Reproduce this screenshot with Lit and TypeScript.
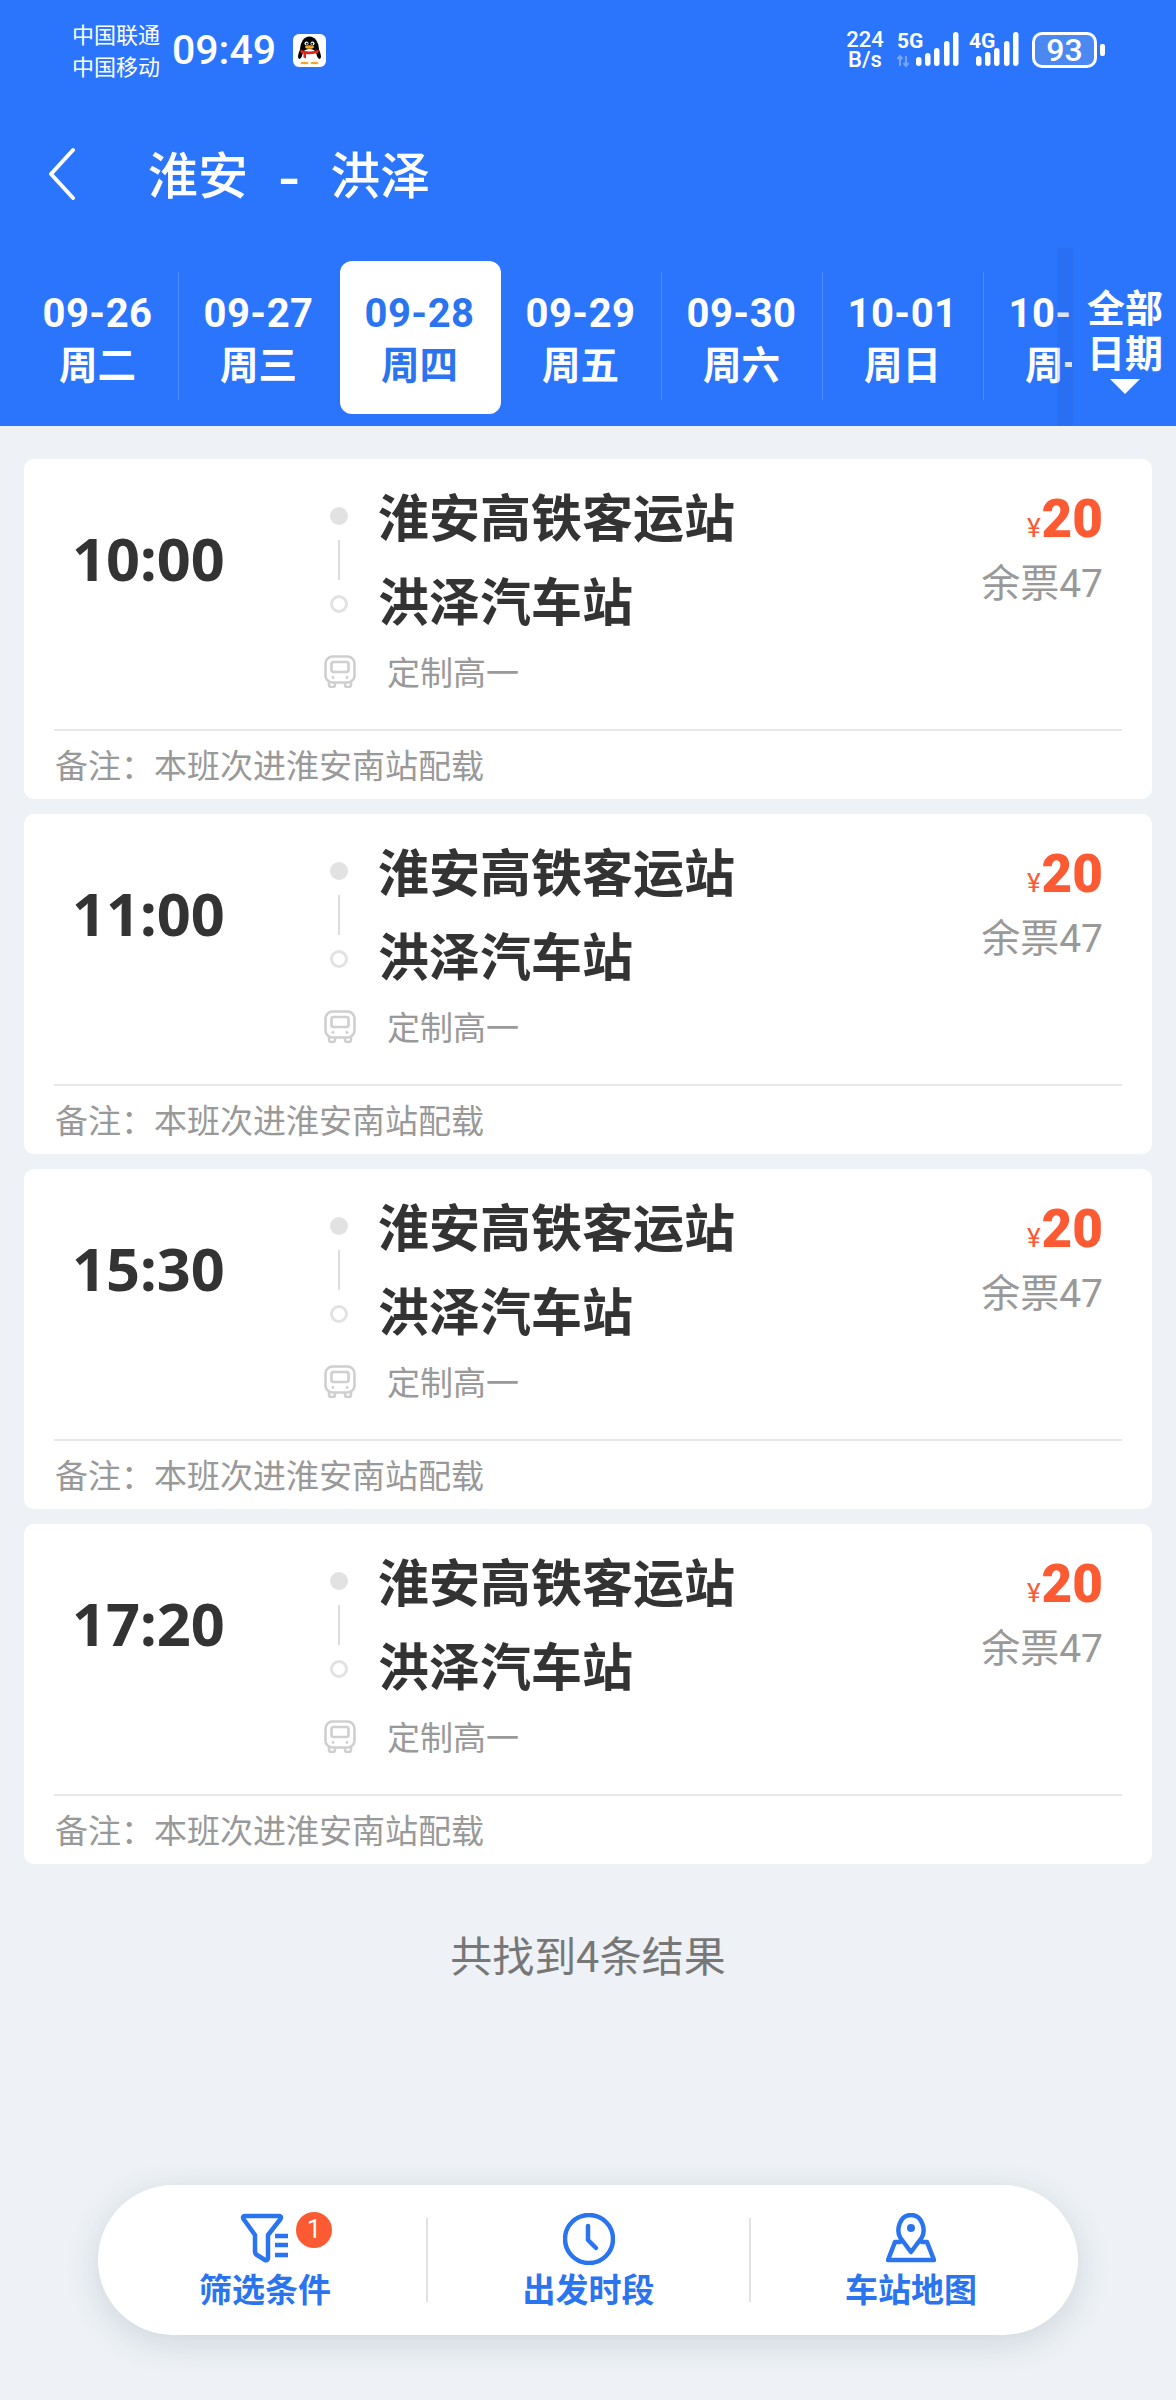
import {css, html, svg, LitElement} from "lit";
import {customElement} from "lit/decorators.js";

const TABS = [
  {date: "09-26", week: "周二"},
  {date: "09-27", week: "周三"},
  {date: "09-28", week: "周四", active: true},
  {date: "09-29", week: "周五"},
  {date: "09-30", week: "周六"},
  {date: "10-01", week: "周日"},
  {date: "10-02", week: "周一"},
];

const TIMES = ["10:00", "11:00", "15:30", "17:20"];

// x offset, top of bar (the bars all end at y=34)
const BARS_5G = [[19, 25], [28, 21], [37, 16], [47, 9], [56, 0]];
const BARS_4G = [[7, 24], [16, 20], [25, 16], [35, 9], [44, 0]];

@customElement("app-root")
export class AppRoot extends LitElement {
  static override styles = css`
    :host {
      display: block;
      width: 1176px;
      min-height: 2400px;
      background: #eef2f6;
      font-family: "Noto Sans CJK SC", "Noto Sans", sans-serif;
    }
    .header {
      background: #2b75fd;
      color: #fff;
    }
    .status {
      display: flex;
      justify-content: space-between;
      align-items: center;
      height: 100px;
      padding: 0 71px 0 72px;
    }
    .status-left,
    .status-right {
      display: flex;
      align-items: center;
    }
    .carrier {
      font-size: 22px;
      line-height: 32px;
      width: 100px;
      margin-top: -3px;
    }
    .clock {
      font-family: Roboto, sans-serif;
      font-weight: 500;
      font-size: 41px;
      line-height: 50px;
      width: 121px;
    }
    .speed {
      font-family: Roboto, sans-serif;
      font-weight: 500;
      font-size: 22px;
      line-height: 20px;
      text-align: center;
      width: 38px;
      margin-right: 13px;
    }
    .net {
      display: block;
      margin-right: 10px;
      overflow: visible;
    }
    .net text {
      font-family: Roboto, sans-serif;
      font-weight: 700;
      font-size: 21px;
      fill: #fff;
    }
    .battery {
      box-sizing: border-box;
      width: 65px;
      height: 36px;
      margin-left: 3px;
      border: 3px solid #fff;
      border-radius: 10px;
      background: #4b88f2;
      font-family: Roboto, sans-serif;
      font-weight: 500;
      font-size: 32px;
      line-height: 30px;
      text-align: center;
    }
    .nub {
      width: 5px;
      height: 12px;
      margin-left: 3px;
      border-radius: 2px;
      background: #fff;
    }
    .nav {
      display: flex;
      align-items: center;
      height: 148px;
      padding-left: 48px;
    }
    .nav svg {
      margin-right: 73px;
    }
    .title {
      font-size: 50px;
      font-weight: 500;
      display: flex;
      align-items: center;
      gap: 30px;
      padding-bottom: 5px;
    }
    .title .dash {
      font-size: 62px;
      line-height: 60px;
    }
    .tabs {
      display: flex;
      height: 178px;
    }
    .scroller {
      display: flex;
      width: 1072px;
      flex: none;
      box-sizing: border-box;
      padding: 13px 0 0 18px;
      overflow: hidden;
    }
    .tab {
      position: relative;
      flex: none;
      box-sizing: border-box;
      width: 161px;
      height: 153px;
      padding: 28px 2px 0 0;
      text-align: center;
      border-radius: 12px;
    }
    .tab:not(.active):not(.before-active):not(:last-child)::after {
      content: "";
      position: absolute;
      right: 0;
      top: 11px;
      bottom: 14px;
      width: 1px;
      background: rgba(255, 255, 255, 0.16);
    }
    .tab.active {
      background: #fff;
      color: #2b74f0;
    }
    .tab .date {
      font-family: Roboto, sans-serif;
      font-weight: 700;
      font-size: 40px;
      letter-spacing: 0.5px;
      line-height: 50px;
    }
    .tab .week {
      font-size: 38.5px;
      font-weight: 700;
      line-height: 46px;
    }
    .all {
      position: relative;
      flex: 1;
      display: flex;
      flex-direction: column;
      align-items: center;
      padding: 35px 0 0 2px;
      font-size: 38px;
      font-weight: 700;
      line-height: 45px;
      background: #2b75fd;
    }
    .all::before {
      content: "";
      position: absolute;
      left: -15px;
      top: 0;
      bottom: 0;
      width: 16px;
      background: rgba(30, 80, 190, 0.16);
    }
    .all .arrow {
      width: 0;
      height: 0;
      margin-top: 6px;
      border-left: 15px solid transparent;
      border-right: 15px solid transparent;
      border-top: 15px solid #fff;
    }
    .list {
      display: flex;
      flex-direction: column;
      gap: 15px;
      padding: 33px 24px 0;
    }
    .card {
      height: 340px;
      background: #fff;
      border-radius: 10px;
      display: flex;
      flex-direction: column;
    }
    .main {
      display: flex;
      height: 270px;
    }
    .time {
      width: 300px;
      box-sizing: border-box;
      padding: 66px 0 0 48px;
      font-family: "Noto Sans", sans-serif;
      font-weight: 700;
      font-size: 59.5px;
      line-height: 66px;
      color: #333;
    }
    .route {
      flex: 1;
    }
    .stops {
      display: flex;
      padding-top: 14px;
    }
    .rail {
      display: flex;
      flex-direction: column;
      align-items: center;
      width: 29px;
      padding-top: 34px;
      margin-right: 25px;
    }
    .dot {
      width: 18px;
      height: 18px;
      box-sizing: border-box;
      border-radius: 50%;
      background: #e2e2e2;
    }
    .dot.hollow {
      background: none;
      border: 3px solid #e2e2e2;
    }
    .line {
      width: 2px;
      height: 40px;
      margin: 15px 0;
      background: #ddd;
    }
    .station {
      font-size: 51px;
      font-weight: 700;
      line-height: 84px;
      color: #333;
    }
    .bus {
      display: flex;
      align-items: center;
      margin-top: 14px;
      font-size: 33px;
      line-height: 33px;
      color: #999;
    }
    .bus svg {
      margin-right: 31px;
    }
    .price-col {
      padding: 30px 49px 0 0;
      text-align: right;
    }
    .price {
      display: flex;
      justify-content: flex-end;
      align-items: baseline;
      height: 60px;
      color: #fb5a33;
      font-family: Roboto, sans-serif;
      font-weight: 900;
      font-size: 53px;
      line-height: 60px;
    }
    .price small {
      font-size: 26px;
      font-weight: 400;
      margin-right: 1px;
    }
    .left {
      font-size: 39px;
      line-height: 62px;
      color: #999;
    }
    .left span {
      font-family: Roboto, sans-serif;
    }
    .rule {
      height: 2px;
      margin: 0 30px;
      background: #e8e8e8;
    }
    .note {
      padding-left: 31px;
      font-size: 33px;
      line-height: 66px;
      color: #999;
    }
    .total {
      margin-top: 60px;
      text-align: center;
      font-size: 42px;
      line-height: 60px;
      color: #777;
    }
    .bar {
      display: flex;
      align-items: center;
      width: 980px;
      height: 150px;
      margin: 201px 0 65px 98px;
      border-radius: 75px;
      background: #fff;
      box-shadow: 0 8px 34px rgba(40, 60, 90, 0.16);
    }
    .item {
      display: flex;
      flex-direction: column;
      align-items: center;
      box-sizing: border-box;
      height: 150px;
      padding-top: 28px;
      color: #2b74f0;
      font-size: 33px;
      font-weight: 700;
      line-height: 46px;
    }
    .item.first {
      width: 328px;
      padding-left: 6px;
    }
    .item.middle {
      width: 321px;
    }
    .item.last {
      width: 327px;
      padding-right: 7px;
    }
    .item svg {
      display: block;
    }
    .icon {
      position: relative;
      height: 52px;
    }
    .badge {
      position: absolute;
      left: 56px;
      top: -1px;
      width: 36px;
      height: 36px;
      border-radius: 50%;
      background: #fb5a33;
      color: #fff;
      font-family: Roboto, sans-serif;
      font-size: 25px;
      font-weight: 400;
      line-height: 36px;
      text-align: center;
    }
    .sep {
      width: 2px;
      height: 84px;
      background: #e2e2e2;
    }
  `;

  renderQQ() {
    return html`<svg width="33" height="33" viewBox="0 0 33 33">
      <rect width="33" height="33" rx="6" fill="#fff" />
      <ellipse cx="16.5" cy="15" rx="9.5" ry="12.5" fill="#000" />
      <ellipse cx="16.5" cy="22" rx="8" ry="7" fill="#fff" />
      <ellipse cx="7.5" cy="20" rx="2" ry="5" fill="#000" transform="rotate(15 7.5 20)" />
      <ellipse cx="25.5" cy="20" rx="2" ry="5" fill="#000" transform="rotate(-15 25.5 20)" />
      <circle cx="13.5" cy="9.5" r="2" fill="#fff" />
      <circle cx="19.5" cy="9.5" r="2" fill="#fff" />
      <circle cx="13.8" cy="9.8" r="1" fill="#000" />
      <circle cx="19.2" cy="9.8" r="1" fill="#000" />
      <ellipse cx="16.5" cy="13" rx="4.5" ry="1.8" fill="#f5a623" />
      <path d="M7.5 15.5C12 18 21 18 25.5 15.5V18.5C23 20 15 20.5 13 20V24.5L10.5 23.5V19.5C9.5 19.2 8 18.8 7.5 18.5Z" fill="#e2231a" />
      <ellipse cx="11.5" cy="29" rx="4" ry="1.2" fill="#f5a623" />
      <ellipse cx="21.5" cy="29" rx="4" ry="1.2" fill="#f5a623" />
    </svg>`;
  }

  renderNet(label: string, bars: number[][], width: number, arrows: boolean) {
    return html`<svg class="net" width=${width} height="36" viewBox="0 0 ${width} 36">
      <text x="0" y="16">${label}</text>
      ${arrows
        ? svg`<path d="M3 34V24M0.5 27L3 24L5.5 27M9 24V34M6.5 31L9 34L11.5 31" fill="none" stroke="#fff" stroke-opacity="0.35" stroke-width="2" />`
        : null}
      ${bars.map(([x, top]) => svg`<rect x=${x} y=${top} width="5.5" height=${34 - top} rx="2.7" fill="#fff" />`)}
    </svg>`;
  }

  renderBusIcon() {
    return html`<svg width="32" height="33" viewBox="0 0 32 33" fill="none" stroke="#cfcfcf" stroke-width="2.6">
      <rect x="1.5" y="1.5" width="29" height="26" rx="7" />
      <rect x="7.5" y="7" width="17" height="10" rx="2" />
      <path d="M5 27V29.5C5 31 6 32 7.5 32H9C10.5 32 11 31 11 29.5V27.5M21 27.5V29.5C21 31 21.5 32 23 32H24.5C26 32 27 31 27 29.5V27" />
      <circle cx="9" cy="22.5" r="1.4" fill="#cfcfcf" stroke="none" />
      <circle cx="23" cy="22.5" r="1.4" fill="#cfcfcf" stroke="none" />
    </svg>`;
  }

  renderCard(time: string) {
    return html`<div class="card">
      <div class="main">
        <div class="time">${time}</div>
        <div class="route">
          <div class="stops">
            <div class="rail">
              <div class="dot"></div>
              <div class="line"></div>
              <div class="dot hollow"></div>
            </div>
            <div>
              <div class="station">淮安高铁客运站</div>
              <div class="station">洪泽汽车站</div>
            </div>
          </div>
          <div class="bus">${this.renderBusIcon()}定制高一</div>
        </div>
        <div class="price-col">
          <div class="price"><small>¥</small>20</div>
          <div class="left">余票<span>47</span></div>
        </div>
      </div>
      <div class="rule"></div>
      <div class="note">备注\uFF1A本班次进淮安南站配载</div>
    </div>`;
  }

  override render() {
    return html`
      <div class="header">
        <div class="status">
          <div class="status-left">
            <div class="carrier">中国联通<br />中国移动</div>
            <div class="clock">09:49</div>
            ${this.renderQQ()}
          </div>
          <div class="status-right">
            <div class="speed">224<br />B/s</div>
            ${this.renderNet("5G", BARS_5G, 62, true)}
            ${this.renderNet("4G", BARS_4G, 50, false)}
            <div class="battery">93</div>
            <div class="nub"></div>
          </div>
        </div>
        <div class="nav">
          <svg width="27" height="54" viewBox="0 0 27 54" fill="none" stroke="#fff" stroke-width="4" stroke-linecap="round" stroke-linejoin="round">
            <path d="M25 3L3 27L25 51" />
          </svg>
          <div class="title"><span>淮安</span><span class="dash">-</span><span>洪泽</span></div>
        </div>
        <div class="tabs">
          <div class="scroller">
            ${TABS.map(
              (t, i) => html`<div class="tab ${t.active ? "active" : ""} ${TABS[i + 1]?.active ? "before-active" : ""}">
                <div class="date">${t.date}</div>
                <div class="week">${t.week}</div>
              </div>`
            )}
          </div>
          <div class="all">
            <div>全部</div>
            <div>日期</div>
            <div class="arrow"></div>
          </div>
        </div>
      </div>
      <div class="list">${TIMES.map((t) => this.renderCard(t))}</div>
      <div class="total">共找到4条结果</div>
      <div class="bar">
        <div class="item first">
          <div class="icon">
            <svg width="50" height="50" viewBox="0 0 50 50" fill="none" stroke="currentColor" stroke-width="4.5" stroke-linecap="round" stroke-linejoin="round">
              <path d="M5 3H39Q42 3 40.5 6L28 22V45Q28 48 25 47L17 42Q15 41 15 38V22L3.5 6Q2 3 5 3Z" />
              <path d="M35 23H48M35 32H48M35 42H48" stroke-linecap="butt" />
            </svg>
            <div class="badge">1</div>
          </div>
          筛选条件
        </div>
        <div class="sep"></div>
        <div class="item middle">
          <div class="icon">
            <svg width="52" height="52" viewBox="0 0 52 52" fill="none" stroke="currentColor" stroke-width="4.5" stroke-linecap="round" stroke-linejoin="round">
              <circle cx="26" cy="26" r="24" />
              <path d="M25 13V27L33 35" />
            </svg>
          </div>
          出发时段
        </div>
        <div class="sep"></div>
        <div class="item last">
          <div class="icon">
            <svg width="50" height="50" viewBox="0 0 50 50" fill="none" stroke="currentColor" stroke-width="4.5" stroke-linecap="round" stroke-linejoin="round">
              <path d="M25 39L14.5 25C10 18 13 2 25 2C37 2 40 18 35.5 25Z" />
              <circle cx="25" cy="15" r="4" fill="currentColor" stroke="none" />
              <path d="M14 29H9L2 47H48L41 29H36" />
            </svg>
          </div>
          车站地图
        </div>
      </div>
    `;
  }
}

declare global {
  interface HTMLElementTagNameMap {
    "app-root": AppRoot;
  }
}
